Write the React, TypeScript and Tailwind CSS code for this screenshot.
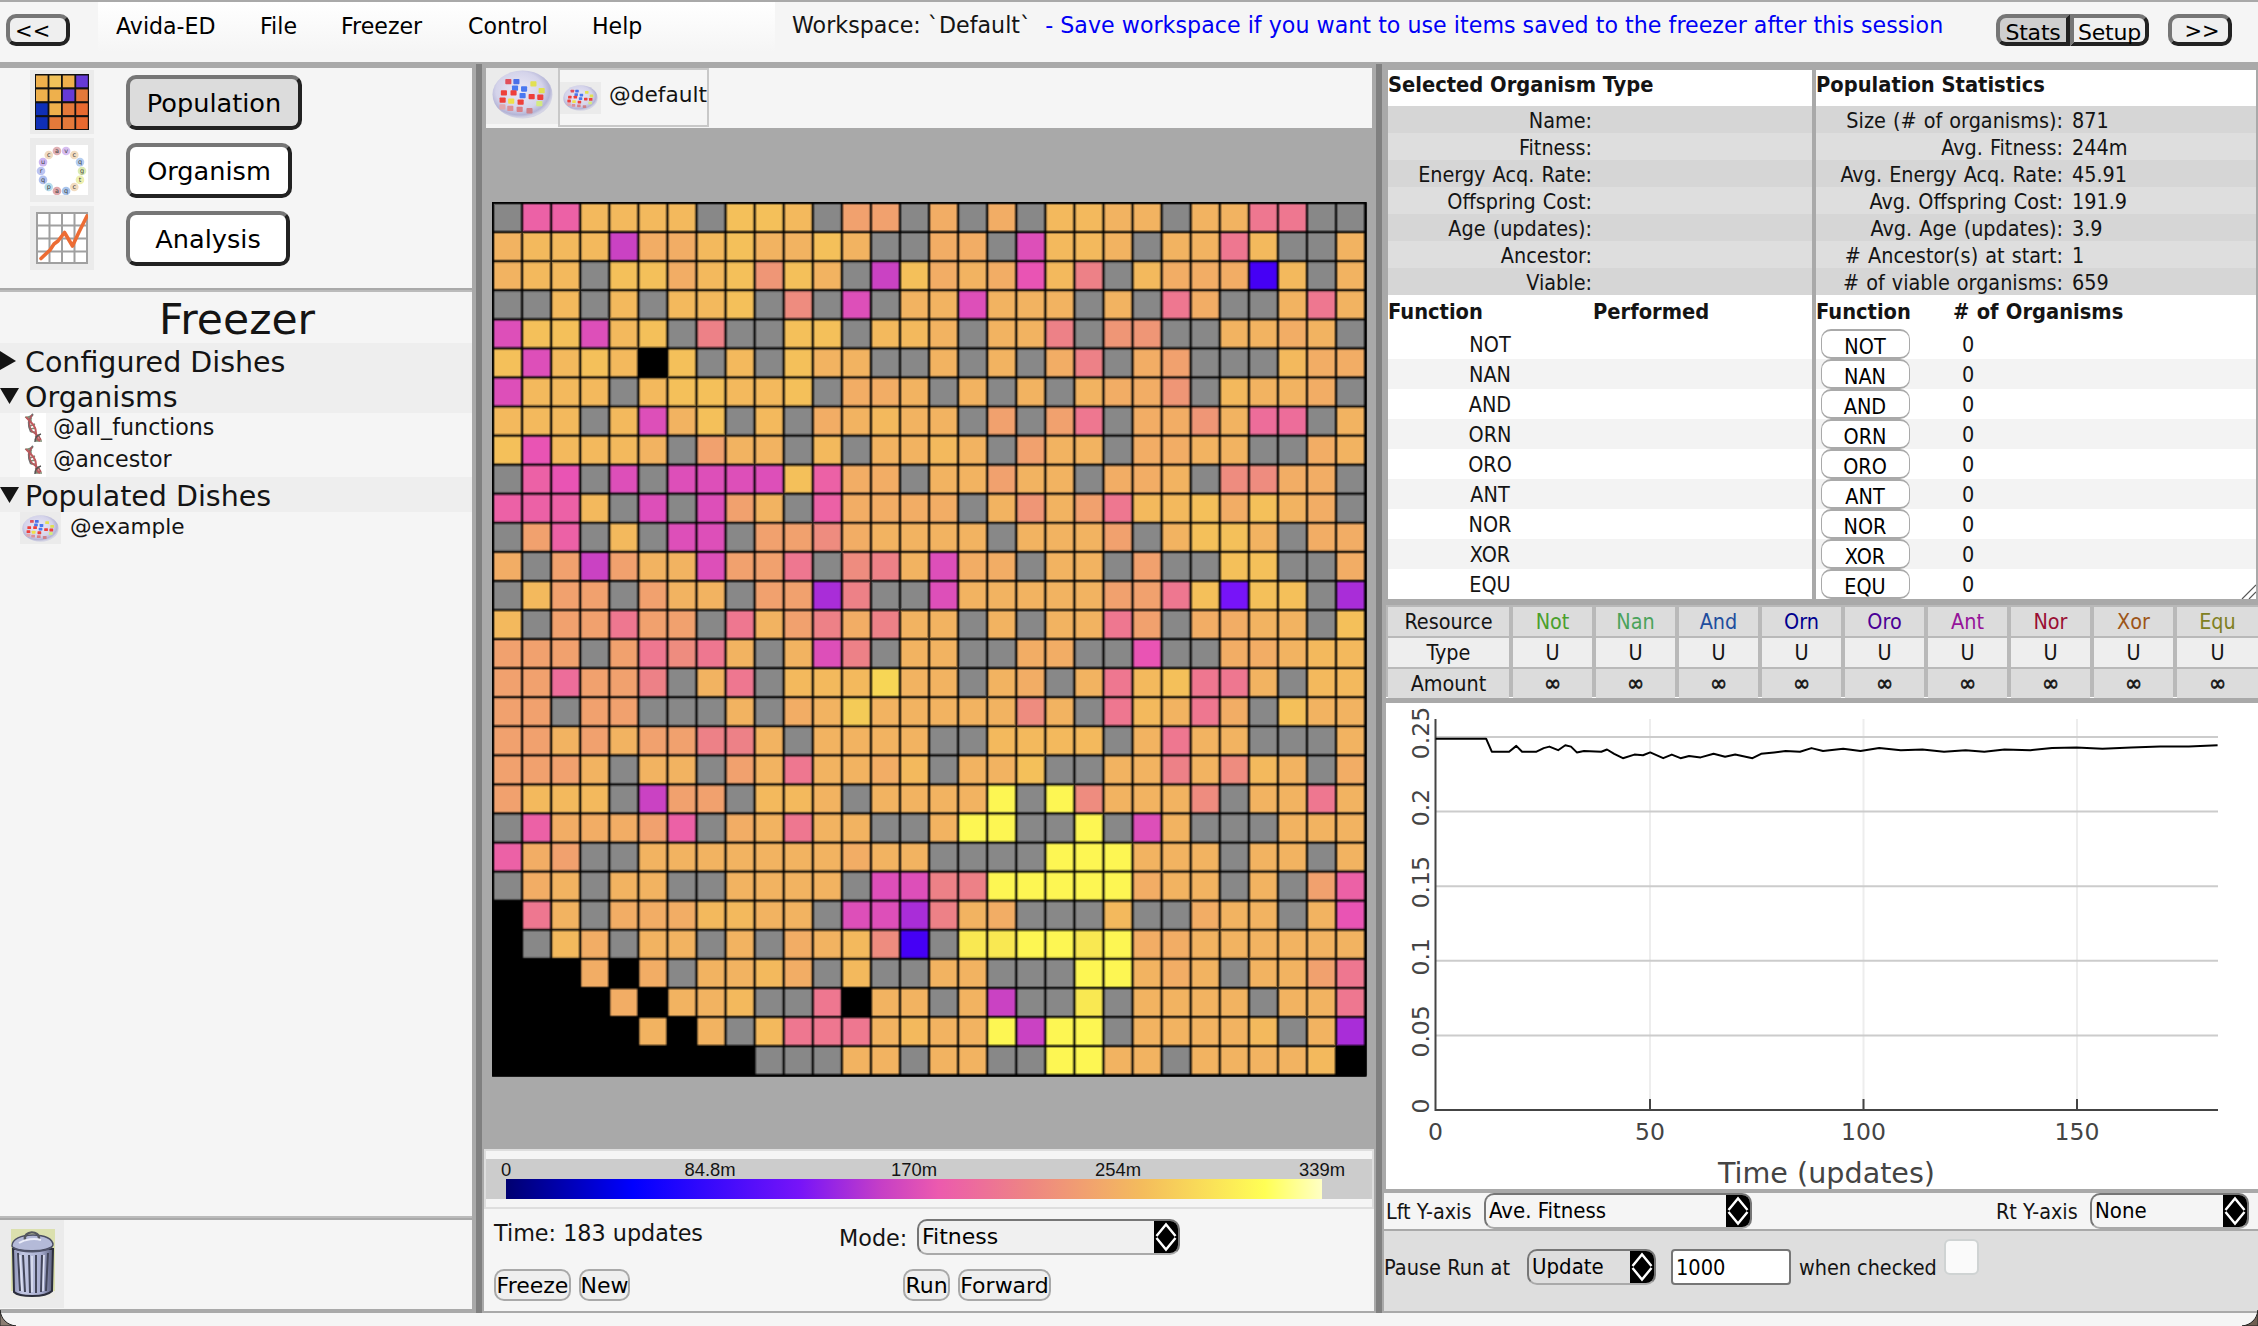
import React from "react";

const V = "font-['DejaVu_Sans',Verdana,sans-serif]";
const T = "font-['DejaVu_Sans_Condensed','DejaVu_Sans',Tahoma,sans-serif] [font-stretch:condensed]";
const BEVEL = "border-4 border-t-[#767676] border-l-[#767676] border-r-[#222] border-b-[#222]";

const COLORS: Record<string, string> = {
  g: "#888888", k: "#000000",
  a: "#f4c05a", b: "#f3b95d", c: "#f2b361", d: "#f2ad65", e: "#f1a16e", f: "#ef9676",
  h: "#ee8c7f", i: "#ed8187", j: "#ee7790", l: "#ed6d9a", m: "#ec61a6", n: "#e954b4",
  o: "#dd4fb9", p: "#ca42c3", q: "#a92dd8", r: "#7714f8", s: "#4500f5",
  w: "#fdf653", x: "#f9e852", y: "#f4cb57", z: "#f7d655",
};

const CELLS = [
  "gmmbbbbgaabgeegdgdgbbccgccjjgg",
  "cbbbpddbaccacggddgobbcgccjbggc",
  "cbbgaadbafacgpadcdnbigbdddsbgc",
  "ggbgbgbbaghgogccocccgcgjdggcjc",
  "oaaobagiggaagbbcgccigffggccdcg",
  "aobabkagbgaccggcgcgdigdegggbdd",
  "obbbgbaabbagddcgcgcgcddfgbccdg",
  "bbbgbocagbgdcbccgegejgddfcllgc",
  "anbbbcgeccgbgccbcgeccgddccggdc",
  "gmngogooooamddgcceccgddcghhddg",
  "mmmbgogoecgmddddgcfcejbbadacdg",
  "gemgbgoogeehdccccgcccegcaacgdd",
  "dgepeccoeejghicoddgccgeggaaggd",
  "gbeegeccgeeqiggoccccceejaraagq",
  "bgeejeegjceidiccgcgccjegddccga",
  "eeegejhjcgcoigccggddggnggddcbb",
  "eeleeigcjgbbbzccgcdgcjbajjcgbb",
  "eegeegggcgdcyccccchcgjbcjdgacc",
  "eececeeiicgccccggbbbbgcjccgggc",
  "eeecgccgecjccdbgccaggccichbcgd",
  "ebbbgpeegbbcgccccwgwhccchgccjc",
  "gmdddemgdcjccggcwwggwgocgggccc",
  "mdeggcccccccdccggggwwwcccgccgc",
  "gdcgccggccccgooiiwwwwwdccgcgem",
  "kjcgdddbbccgooqicdgggbggdccgcn",
  "kgbdgccgcgdcbhsgxxwwxwddcccccc",
  "kkkdkdgccbdgbggccgggwwcdcgccej",
  "kkkkdkccbggjkccgcpggxgccccgccj",
  "kkkkkckcgbjjjcbccwpwwgccccbgcq",
  "kkkkkkkkkgggccgccggwwccgccccbk",
];

function Population() {
  const p = 29.07;
  const n = CELLS.length;
  const size = p * n;
  return (
    <svg width="876" height="876" viewBox="0 0 876 876" className="block">
      <rect x="0" y="0" width="874.5" height="874.5" fill="#000" />
      <g transform="translate(1 1)">
        {CELLS.map((row, r) =>
          row.split("").map((c, k) => (
            <rect key={r + "-" + k} x={k * p} y={r * p} width={p + 0.2} height={p + 0.2} fill={COLORS[c]} />
          ))
        )}
        {Array.from({ length: n + 1 }, (_, i) => (
          <g key={i}>
            <path d={`M${i * p} 0V${size}M0 ${i * p}H${size}`} stroke="#000" strokeOpacity="0.3" strokeWidth="4" />
            <path d={`M${i * p} 0V${size}M0 ${i * p}H${size}`} stroke="#000" strokeOpacity="0.7" strokeWidth="1.7" />
          </g>
        ))}
      </g>
      <rect x="0.75" y="0.75" width="873" height="873" fill="none" stroke="#000" strokeWidth="1.5" />
    </svg>
  );
}

const DOTS: [number, number, string][] = [
  [16.5, 11.7, "#e0505c"], [24.7, 11.7, "#4a6fe8"], [42, 14, "#e2e052"], [23.3, 18.3, "#4a78f0"],
  [32.5, 19.3, "#4a78f0"], [50.4, 21, "#dfe052"], [12, 23.3, "#ee3f3a"], [21.8, 23.3, "#ee3f3a"],
  [31, 26, "#4a78f0"], [40.2, 27, "#ee3f3a"], [49, 27.7, "#ee3f3a"], [10.7, 30.7, "#ee3f3a"],
  [19.4, 31.7, "#efe04a"], [29, 32.7, "#ee3f3a"], [48, 34.3, "#d3ea80"], [10.5, 37.5, "#e0a8b0"],
  [18.5, 39, "#dc9098"], [28, 40, "#d98088"], [38, 41.5, "#cf8088"],
];

function Dish({ w, h, id }: { w: number; h: number; id: string }) {
  return (
    <svg width={w} height={h} viewBox="0 0 62 50" preserveAspectRatio="none" className="block">
      <defs>
        <radialGradient id={id} cx="0.45" cy="0.42" r="0.56">
          <stop offset="0" stopColor="#eceaf6" />
          <stop offset="0.7" stopColor="#d4d3ea" />
          <stop offset="0.9" stopColor="#b4b4d6" />
          <stop offset="1" stopColor="#d4d4e4" />
        </radialGradient>
      </defs>
      <ellipse cx="31" cy="25" rx="30.5" ry="24.5" fill={`url(#${id})`} />
      {DOTS.map(([x, y, c], i) => (
        <rect key={i} x={x - 3} y={y - 2.6} width="6.2" height="5.4" rx="0.8" fill={c} />
      ))}
    </svg>
  );
}

function GridIcon() {
  const o = "#eeb04c", y = "#f0c25a", p = "#663ad6", d = "#e4793a", e = "#e86a30", b = "#0f2fb6";
  const c = [o, y, o, p, o, o, p, d, b, o, d, e, b, d, d, e];
  return (
    <svg width="54" height="56" viewBox="0 0 54 56" className="block">
      <rect width="54" height="56" fill="#111" />
      {c.map((f, i) => (
        <rect key={i} x={1 + (i % 4) * 13.4} y={1.5 + Math.floor(i / 4) * 13.9} width="11.6" height="11.8" fill={f} />
      ))}
    </svg>
  );
}

const GENES: [string, string][] = [
  ["a", "#e0b0b4"], ["v", "#d6bdf0"], ["c", "#f2dcc0"], ["q", "#b4cdf0"], ["g", "#dcebb4"], ["t", "#eef0b0"],
  ["c", "#f2dcc0"], ["q", "#a8c4ec"], ["a", "#e0a8ac"], ["p", "#b8dcec"], ["q", "#b0c0ee"], ["r", "#bcc4f2"],
  ["u", "#ceb6f0"], ["c", "#f0dac0"],
];

function RingIcon() {
  return (
    <svg width="52" height="50" viewBox="0 0 52 50" className="block bg-white">
      {GENES.map(([t, c], i) => {
        const a = ((i - 0.5) * 2 * Math.PI) / GENES.length;
        const x = 25.5 + 20.5 * Math.sin(a);
        const y = 26 - 20.5 * Math.cos(a);
        return (
          <g key={i}>
            <circle cx={x} cy={y} r="4.3" fill={c} />
            <text x={x} y={y + 2} textAnchor="middle" fontSize="6.5" fontFamily="DejaVu Sans" fill="#444">{t}</text>
          </g>
        );
      })}
    </svg>
  );
}

function TrendIcon() {
  return (
    <svg width="52" height="52" viewBox="0 0 52 52" className="block bg-white">
      <path d="M1 0V52M13.5 0V52M26 0V52M38.5 0V52M51 0V52M0 1H52M0 13.5H52M0 26.5H52M0 39.5H52M0 51H52" stroke="#a0a0a0" strokeWidth="2" />
      <path d="M5 46.5L14 38L18 32L22 29L28.5 20.5L36.5 34L43 20L51 4" fill="none" stroke="#ec6c34" strokeWidth="3.6" strokeLinecap="round" strokeLinejoin="round" />
    </svg>
  );
}

function Dna() {
  return (
    <svg width="26" height="32" viewBox="0 0 26 32" className="block bg-white">
      <path d="M5 4C8 5 10 3 13 2M6 5L12 6M8 8H12M10 13L15 11M10 16L16 15M11 19L16 19M15 24L20 23M15 27L21 26M16 28L22 28" stroke="#7c8a72" strokeWidth="1.4" fill="none" />
      <path d="M13 1C8 6 8 13 11 19" stroke="#6f6f6f" strokeWidth="2" fill="none" />
      <path d="M6 4C10 9 16 12 16 20C16 24 18 27 20 28" stroke="#c05a5e" strokeWidth="2" fill="none" />
      <path d="M12 2C9 6 9 12 11 17C13 20 19 22 21 27" stroke="#b4575c" strokeWidth="1.5" fill="none" />
      <path d="M21 21C17 22 15 25 15 29" stroke="#555" strokeWidth="1.5" fill="none" />
    </svg>
  );
}

function Trash() {
  return (
    <svg width="44" height="69" viewBox="0 0 44 69" className="block">
      <defs>
        <linearGradient id="can" x1="0" x2="1">
          <stop offset="0" stopColor="#8a8fb4" />
          <stop offset="0.25" stopColor="#c3c8e4" />
          <stop offset="0.7" stopColor="#a8add0" />
          <stop offset="1" stopColor="#5a5e7c" />
        </linearGradient>
      </defs>
      <rect width="44" height="69" fill="#dbe0ae" />
      <rect y="62" width="44" height="7" fill="#ecebe6" />
      <path d="M2 20L3 63C8 68 34 69 41 62L42 20Z" fill="url(#can)" stroke="#2c2e3c" strokeWidth="2" />
      <path d="M7 24L9 62M12 26L14 63M18 26L19 64M25 26V64M31 26L30 63M37 24L35 62" stroke="#43465a" strokeWidth="2" fill="none" />
      <path d="M9 26L11 62M21 27V63M33 26L32 62" stroke="#dde0f2" strokeWidth="1.6" fill="none" />
      <path d="M1 17C1 10 10 6 22 6S42 10 42 16C40 23 4 24 1 17Z" fill="#b4bad8" stroke="#4a4d62" strokeWidth="1.4" />
      <path d="M3 19C10 24 34 24 41 18" stroke="#50536a" strokeWidth="1.6" fill="none" />
      <path d="M14 11C12 1 29 1 28 10" stroke="#55585f" strokeWidth="2.4" fill="none" />
      <path d="M8 14C14 10 24 9 30 11" stroke="#eceefa" strokeWidth="2" fill="none" />
    </svg>
  );
}

function Bevel({ className = "", children }: { className?: string; children: React.ReactNode }) {
  return (
    <button className={`flex items-center justify-center whitespace-pre text-black ${BEVEL} ${V} ${className}`}>{children}</button>
  );
}

function Select({ value, className = "" }: { value: string; className?: string }) {
  return (
    <div className={`flex justify-between overflow-hidden rounded-[10px] border-2 border-[#a9a9a9] border-t-[#767676] border-l-[#767676] border-r-[#767676] text-black ${className}`}>
      <span className="self-center whitespace-nowrap pl-[3px] leading-[30px]">{value}</span>
      <svg width="24" height="32" viewBox="0 0 24 32" className="block h-full bg-black">
        <path d="M2.5 15L12 3.5L21.5 15M2.5 17L12 28.5L21.5 17" fill="none" stroke="#fff" strokeWidth="2.4" />
      </svg>
    </div>
  );
}

function SmallButton({ children, className }: { children: React.ReactNode; className: string }) {
  return (
    <button className={`flex h-8 items-center justify-center rounded-[10px] border-2 border-[#a9a9a9] bg-[#efefef] pt-[1px] text-[22px] text-black ${V} ${className}`}>{children}</button>
  );
}

function Header() {
  const menu: [string, string][] = [
    ["Avida-ED", "w-[144px]"], ["File", "w-[81px]"], ["Freezer", "w-[127px]"], ["Control", "w-[124px]"], ["Help", "w-[80px]"],
  ];
  return (
    <header className={`flex h-[62px] items-start border-t-2 border-[#a9a9a9] text-[22.1px] text-black ${V}`}>
      <Bevel className="mt-3 ml-1.5 h-8 w-16 rounded-[10px] bg-[#efefef] pt-1 pr-1 text-[21px]">{"<< "}</Bevel>
      <nav className="ml-7 flex h-[50px] w-[677px] bg-linear-to-b from-white to-[#f5f5f5] pt-[9px] pl-[18px] leading-[31px]">
        {menu.map(([m, w]) => <span key={m} className={w}>{m}</span>)}
      </nav>
      <div className="ml-[17px] flex w-[1204px] pt-[7px] text-[22.15px] leading-[32px] whitespace-nowrap text-[#141414]">
        <span className="tracking-[0.03px]">Workspace: `Default`</span>
        <span className="ml-[14px] tracking-[0.03px] text-[#0000f5]">- Save workspace if you want to use items saved to the freezer after this session</span>
      </div>
      <div className="mt-3 flex">
        <Bevel className="h-8 w-[74px] rounded-l-[10px] bg-[#cfcfcf] pt-1 text-[22px] tracking-[-0.2px]">Stats</Bevel>
        <Bevel className="h-8 w-[79px] rounded-r-[10px] bg-[#efefef] pt-1 text-[22px] tracking-[-0.2px]">Setup</Bevel>
        <Bevel className="ml-[19px] h-8 w-16 rounded-[10px] bg-[#efefef] pt-1 pl-1 text-[21px]">{">>"}</Bevel>
      </div>
    </header>
  );
}

function NavItem({ icon, label, className }: { icon: React.ReactNode; label: string; className: string }) {
  return (
    <div className="flex h-16 items-center">
      <div className="flex h-16 w-16 items-center justify-center bg-[#ebebeb]">{icon}</div>
      <Bevel className={`ml-8 h-[55px] rounded-[10px] pt-[2px] text-[25.6px] ${className}`}>{label}</Bevel>
    </div>
  );
}

function Folder({ open, label }: { open: boolean; label: string }) {
  return (
    <div className="flex h-[35px] items-center bg-[#eeeeee] text-[28.5px] leading-[35px]">
      <svg width="24" height="20" viewBox="0 0 24 20" className="block flex-none">
        <path d={open ? "M0 2H19L9.5 18Z" : "M0 0L16 10L0 19Z"} fill="#141414" />
      </svg>
      <span className="pt-1 pl-px">{label}</span>
    </div>
  );
}

function Left() {
  return (
    <aside className={`flex w-[472px] flex-none flex-col pt-1.5 text-[#141414] ${V}`}>
      <div className="flex h-[220px] flex-col gap-1 bg-[#f5f5f5] pt-0.5 pl-[30px]">
        <NavItem icon={<GridIcon />} label="Population" className="w-[176px] bg-[#dcdcdc]" />
        <NavItem icon={<RingIcon />} label="Organism" className="w-[166px] bg-white" />
        <NavItem icon={<TrendIcon />} label="Analysis" className="w-[164px] bg-white" />
      </div>
      <div className="h-1 border-b-2 border-[#bbbbbb]" />
      <div className="h-[924px] bg-[#f5f5f5]">
        <div className="h-[51px] pl-0.5 text-center text-[42.5px] leading-[55px]">Freezer</div>
        <Folder open={false} label="Configured Dishes" />
        <Folder open label="Organisms" />
        {["@all_functions", "@ancestor"].map((t) => (
          <div key={t} className="flex h-8 pl-5 text-[22.2px] leading-[29px]">
            <Dna />
            <span className="pl-[7px]">{t}</span>
          </div>
        ))}
        <Folder open label="Populated Dishes" />
        <div className="flex h-8 pl-5 text-[21.6px] leading-[29px]">
          <div className="flex h-8 w-[41px] items-center justify-center bg-[#ebebeb]"><Dish w={37} h={27} id="dish-a" /></div>
          <span className="pl-[9px]">@example</span>
        </div>
      </div>
      <div className="h-1 border-t-2 border-[#bbbbbb]" />
      <div className="h-[89px] bg-[#f5f5f5]">
        <div className="h-[88px] w-16 bg-[#ebebeb] pt-[9px] pl-[11px]"><Trash /></div>
      </div>
    </aside>
  );
}

function Middle() {
  return (
    <section className={`flex w-[894px] flex-none flex-col pt-1.5 text-[#141414] ${V}`}>
      <div className="mx-1 flex h-[60px] w-[886px] bg-[#f5f5f5]">
        <div className="h-14 w-[72px] bg-[#ebebeb] pt-0.5 pl-1.5"><Dish w={61} h={49} id="dish-b" /></div>
        <div className="flex h-[59px] w-[151px] items-center border-2 border-[#c8c8c8] text-[21.7px]">
          <div className="flex h-8 w-[41px] items-center justify-center bg-[#ebebeb]"><Dish w={35} h={26} id="dish-c" /></div>
          <span className="pb-1 pl-2">@default</span>
        </div>
      </div>
      <div className="h-[1021px] pt-[74px] pl-[10px]"><Population /></div>
      <div className="ml-0.5 h-[164px] w-[890px] border-b-2 border-[#a9a9a9] bg-[#f5f5f5]">
        <div className="h-[60px] border-2 border-[#dedede] py-2">
          <div className="h-10 bg-[#cccccc] font-['Liberation_Sans',Arial,sans-serif] text-[18.4px] leading-5">
            <div className="-ml-[82px] flex pt-px text-center">
              {["0", "84.8m", "170m", "254m", "339m"].map((t) => <span key={t} className="w-[204px] flex-none">{t}</span>)}
            </div>
            <div className="mt-[-1px] ml-5 h-5 w-[816px] bg-[linear-gradient(to_right,#000070,#0000ff_15.5%,#7714f8_36%,#c63fc6_46%,#ec5aae_53%,#ee8583_64%,#f4bc5c_78%,#ffff55_93%,#ffffc4)]" />
          </div>
        </div>
        <div className="flex h-12 pt-[10px] pl-[10px] text-[22.3px]">
          <span className="w-[345px] leading-[28px]">Time: 183 updates</span>
          <span className="w-[78px] leading-[38px]">Mode:</span>
          <Select value="Fitness" className="h-9 w-[263px] bg-[#f0f0f0] text-[22px]" />
        </div>
        <div className="mt-3 flex pl-[10px]">
          <SmallButton className="w-[77px]">Freeze</SmallButton>
          <SmallButton className="ml-2 w-[51px]">New</SmallButton>
          <SmallButton className="ml-[273px] w-[47px]">Run</SmallButton>
          <SmallButton className="ml-2 w-[93px]">Forward</SmallButton>
        </div>
      </div>
    </section>
  );
}

const FUNCS = ["NOT", "NAN", "AND", "ORN", "ORO", "ANT", "NOR", "XOR", "EQU"];
const ORG = ["Name:", "Fitness:", "Energy Acq. Rate:", "Offspring Cost:", "Age (updates):", "Ancestor:", "Viable:"];
const POP: [string, string][] = [
  ["Size (# of organisms):", "871"], ["Avg. Fitness:", "244m"], ["Avg. Energy Acq. Rate:", "45.91"],
  ["Avg. Offspring Cost:", "191.9"], ["Avg. Age (updates):", "3.9"], ["# Ancestor(s) at start:", "1"], ["# of viable organisms:", "659"],
];

function StatTable({ title, rows, labelWidth }: { title: string; rows: [string, string][]; labelWidth: string }) {
  return (
    <>
      <div className="h-9 text-[21.7px] leading-[29px] font-bold whitespace-nowrap">{title}</div>
      {rows.map(([k, v]) => (
        <div key={k} className="flex h-[27px] text-[21.4px] leading-[29px] whitespace-nowrap odd:bg-[#dedede] even:bg-[#d6d6d6]">
          <span className={`${labelWidth} text-right [word-spacing:1px]`}>{k}</span>
          <span className="pl-[9px]">{v}</span>
        </div>
      ))}
    </>
  );
}

function Resources() {
  const names: [string, string][] = [
    ["Not", "text-[#4aa02c]"], ["Nan", "text-[#4ba35c]"], ["And", "text-[#1f4e9e]"], ["Orn", "text-[#00008f]"], ["Oro", "text-[#4b0096]"],
    ["Ant", "text-[#96149a]"], ["Nor", "text-[#9a0f33]"], ["Xor", "text-[#9c5518]"], ["Equ", "text-[#808022]"],
  ];
  const plain = (t: string, c: string) => names.map(() => [t, c] as [string, string]);
  const rows = [
    { label: "Resource", bg: "bg-[#dcdcdc]", cells: names },
    { label: "Type", bg: "bg-[#eeeeee]", cells: plain("U", "") },
    { label: "Amount", bg: "bg-[#dcdcdc]", cells: plain("∞", "font-['DejaVu_Sans'] text-[23px] [-webkit-text-stroke:0.6px_#141414]") },
  ];
  return (
    <div className="flex h-[93px] flex-col gap-1 border-b border-white bg-[#b9b9b9] pt-0.5 pl-0.5 text-[21.4px] leading-[29px]">
      {rows.map((r) => (
        <div key={r.label} className="grid h-[27px] grid-cols-[121px_repeat(8,79px)_81px] gap-x-1 text-center">
          <div className={r.bg}>{r.label}</div>
          {r.cells.map(([t, c], i) => <div key={i} className={`${r.bg} ${c}`}>{t}</div>)}
        </div>
      ))}
    </div>
  );
}

const LINE: [number, number][] = [
  [997, 513], [1032, 513], [1036, 522], [1048, 522], [1053, 518], [1057, 522], [1067, 522], [1072, 519.5], [1076, 518.5], [1082, 521],
  [1087, 517.5], [1091, 518.5], [1095, 522.5], [1100, 521.5], [1112, 522], [1116, 520.5], [1121, 523.5], [1127, 526.5], [1135, 524], [1141, 524.5],
  [1146, 522.5], [1155, 526.5], [1161, 524], [1167, 526.5], [1173, 525], [1181, 526], [1190, 523.5], [1198, 525.5], [1205, 524], [1217, 526.5],
  [1223, 523.5], [1232, 522.5], [1240, 521.5], [1250, 522], [1258, 519.5], [1266, 521.5], [1280, 520], [1292, 521.5], [1305, 519.5], [1320, 521],
  [1335, 520.5], [1350, 522], [1365, 521], [1378, 522], [1392, 520.5], [1410, 521], [1425, 519.5], [1442, 519], [1460, 520], [1480, 519],
  [1500, 518.5], [1520, 518.5], [1540, 517.5],
];

function Chart() {
  const ys: [string, number][] = [["0.25", 737], ["0.2", 811.6], ["0.15", 886.2], ["0.1", 960.8], ["0.05", 1035.4], ["0", 1110]];
  const xs: [string, number][] = [["0", 1435.5], ["50", 1650], ["100", 1863.5], ["150", 2077]];
  return (
    <svg width="872" height="486" viewBox="1386 703 872 486" className={`block bg-white [font-stretch:normal] ${V}`} fill="#444">
      {xs.slice(1).map(([t, x]) => <path key={t} d={`M${x} 719V1110`} stroke="#ededed" strokeWidth="2" />)}
      {ys.slice(0, 5).map(([t, y]) => <path key={t} d={`M1435 ${y}H2218`} stroke="#cccccc" strokeWidth="2" />)}
      <path d="M1435.5 719V1110H2218M1650 1099V1110M1863.5 1099V1110M2077 1099V1110" fill="none" stroke="#444" strokeWidth="2" />
      <polyline points={LINE.map(([x, y]) => `${(x * 1.44).toFixed(1)},${(y * 1.44).toFixed(1)}`).join(" ")} fill="none" stroke="#000" strokeWidth="2" strokeLinejoin="round" />
      {ys.map(([t, y]) => (
        <text key={t} transform={`translate(1429 ${y - 4}) rotate(-90)`} textAnchor="middle" fontSize="23.5">{t}</text>
      ))}
      {xs.map(([t, x]) => <text key={t} x={x} y="1140" textAnchor="middle" fontSize="23.5">{t}</text>)}
      <text x="1826.5" y="1183" textAnchor="middle" fontSize="28.6">Time (updates)</text>
    </svg>
  );
}

function Right() {
  return (
    <section className={`flex w-[876px] flex-none flex-col pl-0.5 text-[21.7px] text-[#141414] ${T}`}>
      <div className="relative flex h-[543px] pt-2 pr-0.5 pb-1.5 pl-1">
        <div className="w-[424px] bg-white">
          <StatTable title="Selected Organism Type" rows={ORG.map((o) => [o, ""] as [string, string])} labelWidth="w-[204px]" />
          <div className="flex h-[34px] leading-[34px] font-bold"><span className="w-[205px]">Function</span><span>Performed</span></div>
          {FUNCS.map((f) => (
            <div key={f} className="h-[30px] pt-px text-[21.4px] leading-[29px] odd:bg-[#f3f3f3] even:bg-white">
              <div className="w-[204px] text-center">{f}</div>
            </div>
          ))}
        </div>
        <div className="ml-1 w-[440px] bg-white">
          <StatTable title="Population Statistics" rows={POP} labelWidth="w-[247px]" />
          <div className="flex h-[34px] leading-[34px] font-bold"><span className="w-[137px]">Function</span><span className="[word-spacing:0.5px]"># of Organisms</span></div>
          {FUNCS.map((f) => (
            <div key={f} className="flex h-[30px] pl-[5px] text-[21.4px] leading-[31px] odd:bg-[#f3f3f3] even:bg-white">
              <button className="flex h-[30px] w-[89px] items-center justify-center rounded-[10px] border-2 border-x-[1.5px] border-[#a9a9a9] bg-white pt-1 pr-px text-black">{f}</button>
              <span className="pl-[52px]">0</span>
            </div>
          ))}
        </div>
        <svg width="15" height="15" viewBox="0 0 15 15" className="absolute right-0.5 bottom-1.5">
          <path d="M1 15L15 1M8 15L15 8" stroke="#555" strokeWidth="1.2" />
        </svg>
      </div>
      <div className="pl-0.5"><Resources /></div>
      <div className="mt-[5px] pl-0.5"><Chart /></div>
      <div className="mt-1 flex h-9 bg-[#f5f5f5] pl-0.5 text-[21.4px] leading-[37px]">
        <span className="w-[98px]">Lft Y-axis</span>
        <Select value="Ave. Fitness" className="h-9 w-[268px] bg-[#f5f5f5] text-[22px]" />
        <span className="ml-[244px] w-[94px]">Rt Y-axis</span>
        <Select value="None" className="h-9 w-[159px] bg-[#f5f5f5] text-[22px]" />
      </div>
      <div className="mt-0.5 flex h-20 bg-[#dedede] pt-[18px] text-[21.6px] leading-[37px]">
        <span className="w-[143px]">Pause Run at</span>
        <Select value="Update" className="h-9 w-[129px] bg-[#dedede] text-[22px]" />
        <div className="ml-[15px] flex h-9 w-[120px] items-center rounded-[4px] border-2 border-[#767676] bg-white pl-[3px] text-black">1000</div>
        <span className="ml-2 w-[145px] text-[21.4px]">when checked</span>
        <div className="-mt-[10px] h-9 w-[35px] rounded-md border-2 border-[#cfd3d3] bg-[#fafafa]" />
      </div>
    </section>
  );
}

function Divider() {
  return <div className="mt-0.5 w-1.5 flex-none bg-[#808080]" />;
}

export default function App() {
  return (
    <div className="relative flex h-[1326px] w-[2258px] flex-col overflow-hidden bg-[#f5f5f5]">
      <Header />
      <main className="flex h-[1251px] bg-[#a9a9a9]">
        <div className="flex w-[476px] flex-none"><Left /></div>
        <Divider />
        <div className="w-[894px] flex-none"><Middle /></div>
        <Divider />
        <Right />
      </main>
      <svg width="16" height="16" viewBox="0 0 16 16" className="absolute bottom-0 left-0">
        <path d="M0 0C1 9 7 15 16 16H0Z" fill="#8a7d72" stroke="#222" />
      </svg>
      <svg width="16" height="16" viewBox="0 0 16 16" className="absolute right-0 bottom-0">
        <path d="M16 0C15 9 9 15 0 16H16Z" fill="#6f5f52" stroke="#222" />
      </svg>
    </div>
  );
}
